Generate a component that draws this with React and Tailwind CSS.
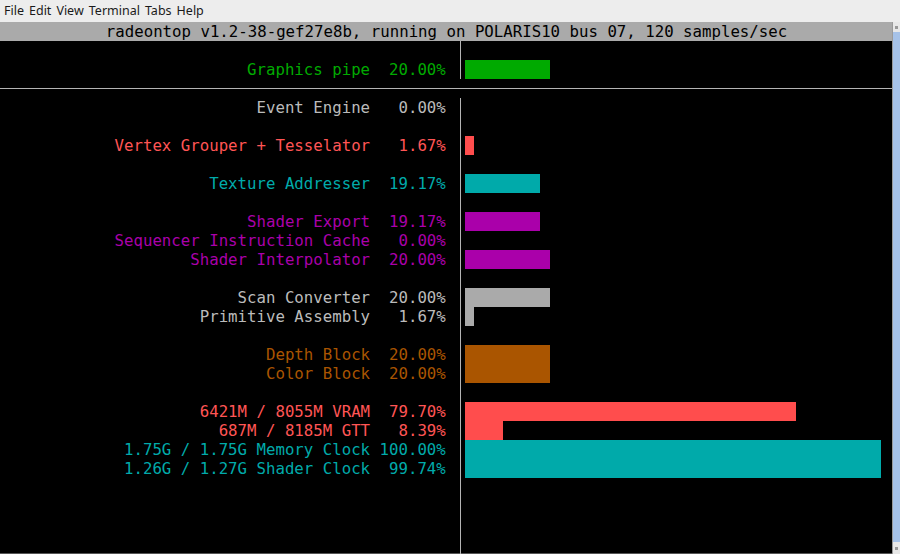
import React from "react";

const ROWS = [
  null,
  { label: "Graphics pipe", pct: "20.00", color: "text-[#00aa00]", bar: 9, barColor: "bg-[#00aa00]" },
  "line",
  { label: "Event Engine", pct: "0.00", color: "text-[#bbbbbb]", bar: 0 },
  null,
  { label: "Vertex Grouper + Tesselator", pct: "1.67", color: "text-[#ff5555]", bar: 1, barColor: "bg-[#ff4d4d]" },
  null,
  { label: "Texture Addresser", pct: "19.17", color: "text-[#00aaaa]", bar: 8, barColor: "bg-[#00aaaa]" },
  null,
  { label: "Shader Export", pct: "19.17", color: "text-[#aa00aa]", bar: 8, barColor: "bg-[#aa00aa]" },
  { label: "Sequencer Instruction Cache", pct: "0.00", color: "text-[#aa00aa]", bar: 0 },
  { label: "Shader Interpolator", pct: "20.00", color: "text-[#aa00aa]", bar: 9, barColor: "bg-[#aa00aa]" },
  null,
  { label: "Scan Converter", pct: "20.00", color: "text-[#bbbbbb]", bar: 9, barColor: "bg-[#aaaaaa]" },
  { label: "Primitive Assembly", pct: "1.67", color: "text-[#bbbbbb]", bar: 1, barColor: "bg-[#aaaaaa]" },
  null,
  { label: "Depth Block", pct: "20.00", color: "text-[#aa5500]", bar: 9, barColor: "bg-[#aa5500]" },
  { label: "Color Block", pct: "20.00", color: "text-[#aa5500]", bar: 9, barColor: "bg-[#aa5500]" },
  null,
  { label: "6421M / 8055M VRAM", pct: "79.70", color: "text-[#ff5555]", bar: 35, barColor: "bg-[#ff4d4d]" },
  { label: "687M / 8185M GTT", pct: "8.39", color: "text-[#ff5555]", bar: 4, barColor: "bg-[#ff4d4d]" },
  { label: "1.75G / 1.75G Memory Clock", pct: "100.00", color: "text-[#00aaaa]", bar: 44, barColor: "bg-[#00aaaa]" },
  { label: "1.26G / 1.27G Shader Clock", pct: "99.74", color: "text-[#00aaaa]", bar: 44, barColor: "bg-[#00aaaa]" },
  null,
  null,
  null,
  null,
];

const Row = ({ row }) => {
  if (row === "line") {
    return (
      <div className="h-[19px] flex items-center">
        <div className="h-px w-full bg-[#b4b4b4]" />
      </div>
    );
  }
  return (
    <div className="h-[19px] flex pl-px">
      <div className="w-[48.5ch] shrink-0">
        {row && (
          <div className={`w-[47ch] text-right whitespace-pre ${row.color}`}>
            {row.label + " " + (row.pct + "%").padStart(7, " ")}
          </div>
        )}
      </div>
      <div className="w-px shrink-0 bg-[#b4b4b4]" />
      <div className="flex-1 pl-[calc(0.5ch-1px)]">
        {row && row.bar > 0 && (
          <div className={`h-full ${row.barColor}`} style={{ width: `${row.bar}ch` }} />
        )}
      </div>
    </div>
  );
};

export default function App() {
  return (
    <div className="w-[900px] h-[554px] flex flex-col bg-[#ededed] overflow-hidden">
      <div className="h-[22px] shrink-0 flex items-center gap-[5px] pl-[4px] text-[12.5px] text-[#1a1a1a] font-['Noto_Sans',sans-serif]">
        <span>File</span>
        <span>Edit</span>
        <span>View</span>
        <span>Terminal</span>
        <span>Tabs</span>
        <span>Help</span>
      </div>
      <div className="flex h-[532px] shrink-0">
        <div className="w-[892px] bg-black font-['DejaVu_Sans_Mono',monospace] text-[15.73px] leading-[19px] shadow-[inset_0_-1px_0_#555]">
          <div className="h-[19px] bg-[#aaaaaa] text-black text-center whitespace-pre pl-px">
            radeontop v1.2-38-gef27e8b, running on POLARIS10 bus 07, 120 samples/sec
          </div>
          {ROWS.map((row, i) => (
            <Row key={i} row={row} />
          ))}
        </div>
        <div className="flex-1 flex flex-col border-l border-[#9a9a9a]">
          <div className="h-[10px] bg-[#e8e8e8] flex items-center justify-center">
            <div className="w-[3px] h-[3px] bg-[#999]" />
          </div>
          <div className="flex-1 bg-[#a6c2e8]" />
          <div className="h-[12px] bg-[#e8e8e8] flex items-center justify-center">
            <div className="w-[3px] h-[3px] bg-[#999]" />
          </div>
        </div>
      </div>
    </div>
  );
}
